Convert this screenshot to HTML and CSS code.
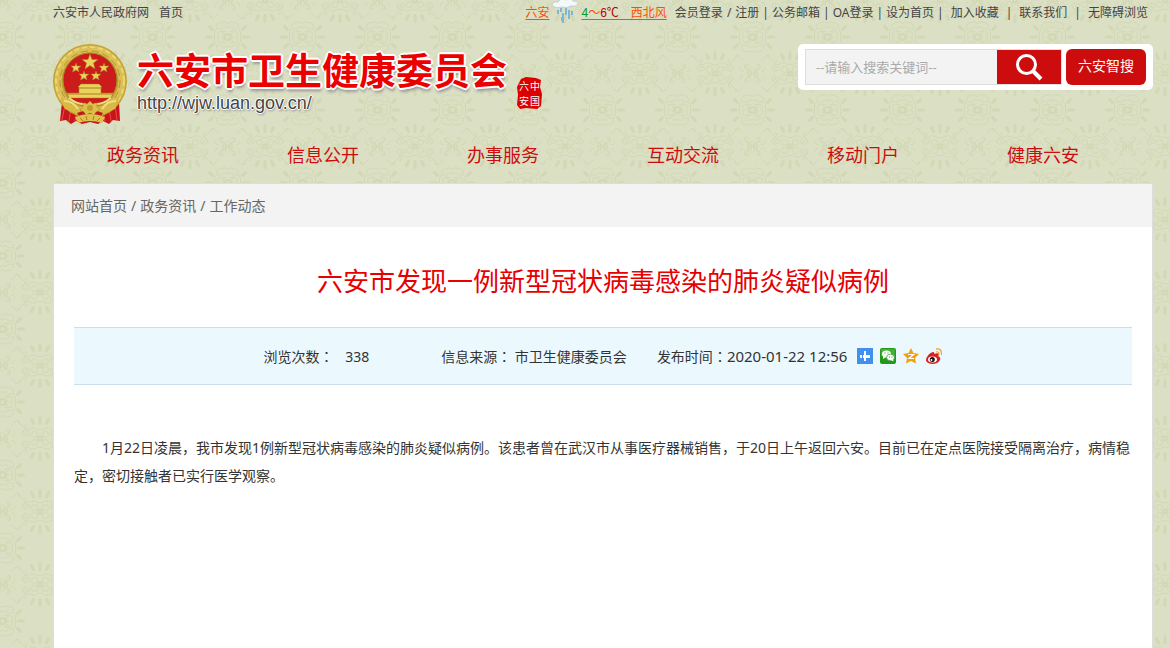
FILE: index.html
```html
<!DOCTYPE html>
<html lang="zh-CN">
<head>
    <meta charset="UTF-8">
    <meta name="viewport" content="width=device-width, initial-scale=1.0">
    <title>六安市发现一例新型冠状病毒感染的肺炎疑似病例</title>
    <link rel="stylesheet" href="styles.css">
</head>
<body>
    <div class="topbar">
        <div class="topbar-left">
            <a href="#">六安市人民政府网</a>
            <a href="#">首页</a>
        </div>
        <div class="weather">
            <a href="#">六安</a>
            <svg class="rain" viewBox="0 0 28 24" width="28" height="24" aria-hidden="true">
                <path d="M1 5Q2 1 7 2Q10-3 15 0Q20-3 22 1Q27 1 27 4Q25 7 20 6Q15 9 11 7Q4 9 1 5Z" fill="#f4f8fa" stroke="#c3ced6"/>
                <path d="M7 10v4M10 8v4M12 13v10M15 8v7M18 10v9M11 17v4M21 11v4" stroke="#80b5d4" stroke-width="2"/>
            </svg>
            <a href="#"><span class="low">4</span>～<span class="high">6℃</span>　西北风</a>
        </div>
        <div class="topbar-right">
            <a href="#">会员登录</a><span class="slash">/</span><a href="#">注册</a><span>|</span><a href="#">公务邮箱</a><span>|</span><a href="#">OA登录</a><span>|</span><a href="#">设为首页</a><span>|</span><a class="wide" href="#">加入收藏</a><span>|</span><a class="wide" href="#">联系我们</a><span>|</span><a class="wide" href="#">无障碍浏览</a>
        </div>
    </div>

    <header class="header">
        <a class="logo" href="#" aria-label="六安市卫生健康委员会">
            <svg class="emblem" viewBox="0 0 74 82" width="74" height="82" aria-hidden="true">
                <path d="M9 59L20 63L35 68L54 63L66 59L67 78L60 77L56 81L50 78L45 81L37 79L29 81L23 78L18 81L13 77L7 78Z" fill="#c8141a"/>
                <path d="M12 62L9 77M18 65L16 78M24 68L22 78M62 62L64 77M56 65L58 78M50 68L52 78" stroke="#ee4a3e" stroke-width="1"/>
                <ellipse cx="37" cy="38" rx="37" ry="37" fill="#c4a335"/>
                <ellipse cx="37" cy="38" rx="32" ry="32" fill="none" stroke="#d9bf55" stroke-width="7"/>
                <ellipse cx="37" cy="38" rx="34" ry="34" fill="none" stroke="#ecd770" stroke-width="2" stroke-dasharray="5 3"/>
                <ellipse cx="37" cy="38" rx="30" ry="30" fill="none" stroke="#b8942c" stroke-width="1" stroke-dasharray="7 4"/>
                <ellipse cx="37" cy="37" rx="27" ry="27" fill="#cb1b1b" stroke="#a9882a" stroke-width="1"/>
                <g fill="#ead25e" stroke="#a87e1c" stroke-width=".5">
                    <path d="M37 11L39 16.500L45 16.500L40.500 20L42 26L37 22.500L32 26L33.500 20L29 16.500L35 16.500Z"/>
                    <path d="M23 20L24 23L28 23L25 25.500L26 29L23 27L19.500 29L20.500 25.500L18 23L22 23Z"/>
                    <path d="M51 20L52 23L56 23L53 25.500L54 29L51 27L47.500 29L48.500 25.500L46 23L50 23Z"/>
                    <path d="M31 28L32 31L36 31L33 33.500L34 37L31 35L27.500 37L28.500 33.500L26 31L30 31Z"/>
                    <path d="M43 28L44 31L48 31L45 33.500L46 37L43 35L39.500 37L40.500 33.500L38 31L42 31Z"/>
                    <path d="M28 41H46L49 44H48V50H60L58 55H16L14 50H26V44H25Z"/>
                </g>
                <path d="M25 45H49M15 51H59" stroke="#a87e1c"/>
                <path d="M6 50Q17 68 37 62Q57 68 68 50L62 66L50 71Q37 64 24 71L12 66Z" fill="#d7b944"/>
                <path d="M11 58Q20 58 25 66M63 58Q54 58 49 66M16 55Q25 62 33 61M58 55Q49 62 41 61" fill="none" stroke="#f0dd80" stroke-width="2"/>
                <path d="M24 70Q37 64 50 70L48 73Q37 70 26 73Z" fill="#bd1c19"/>
                <path d="M37 58L40 61L44 60L44 64L47 67L43 69L41 72L37 70L33 72L31 69L27 67L30 64L30 60L34 61Z" fill="#dcc04c" stroke="#a87e1c" stroke-width=".5"/>
                <circle cx="37" cy="65" r="3" fill="#c69b2d"/>
                <path d="M22 74Q37 68 52 74L49 80Q37 76 25 80Z" fill="#dfc14d"/>
                <path d="M27 75L30 78M33 73L34 77M41 73L40 77M47 75L44 78" stroke="#a87e1c"/>
            </svg>
            <span class="logo-text">
                <span class="logo-name">六安市卫生健康委员会</span>
                <span class="logo-url">http://wjw.luan.gov.cn/</span>
            </span>
            <svg class="seal" viewBox="0 0 25 32" width="25" height="32" aria-hidden="true">
                <path d="M4 2L9 0L19 1L24 3L23 10L25 17L24 29L20 32L9 31L3 32L0 28L1 18L0 10Z" fill="#dc0000"/>
                <text x="13" y="13">中</text>
                <text x="2" y="13">六</text>
                <text x="13" y="28">国</text>
                <text x="2" y="28">安</text>
            </svg>
        </a>
        <form class="search">
            <div class="search-field">
                <input type="text" placeholder="--请输入搜索关键词--" aria-label="搜索关键词">
                <button type="button" aria-label="搜索">
                    <svg viewBox="0 0 28 28" width="28" height="28" fill="none" stroke="#fff">
                        <circle cx="11.500" cy="11.500" r="9" stroke-width="3"/>
                        <path d="M18 18L26 26" stroke-width="4"/>
                    </svg>
                </button>
            </div>
            <button class="smart" type="button">六安智搜</button>
        </form>
    </header>

    <nav class="nav">
        <a href="#">政务资讯</a>
        <a href="#">信息公开</a>
        <a href="#">办事服务</a>
        <a href="#">互动交流</a>
        <a href="#">移动门户</a>
        <a href="#">健康六安</a>
    </nav>

    <main class="content">
        <div class="breadcrumb">
            <a href="#">网站首页</a><span>/</span><a href="#">政务资讯</a><span>/</span><a href="#">工作动态</a>
        </div>
        <article class="article">
            <h1>六安市发现一例新型冠状病毒感染的肺炎疑似病例</h1>
            <div class="info">
                <span class="views">浏览次数<i lang="zh-TW">：</i> <b>338</b></span>
                <span class="source">信息来源<i lang="zh-TW">：</i> 市卫生健康委员会</span>
                <span class="date">发布时间<i lang="zh-TW">：</i><b>2020-01-22 12:56</b></span>
                <span class="share">
                    <a href="#" aria-label="分享">
                        <svg viewBox="0 0 16 16" width="16" height="16">
                            <path d="M0 0H16V16H0Z" fill="#4090ee"/>
                            <path d="M7 3H9V7H13V10H9V13H7V10H6V7H7ZM3 7H5V10H3Z" fill="#fff"/>
                        </svg>
                    </a>
                    <a href="#" aria-label="微信">
                        <svg viewBox="0 0 16 16" width="16" height="16">
                            <rect width="16" height="16" rx="2" fill="#219a19"/>
                            <path d="M1 1H15V8H1Z" fill="#44b033"/>
                            <ellipse cx="6.500" cy="6" rx="4.500" ry="3.500" fill="#fff"/>
                            <path d="M3 8L3 11L6 9Z" fill="#fff"/>
                            <ellipse cx="10.500" cy="9.500" rx="4" ry="3.200" fill="#fff" stroke="#219a19" stroke-width=".7"/>
                            <path d="M11 12L13.500 13.500L13 11Z" fill="#fff"/>
                            <path d="M4.500 5h1M7.500 5h1M9 9h1M11.500 9h1" stroke="#219a19"/>
                        </svg>
                    </a>
                    <a href="#" aria-label="QQ空间">
                        <svg viewBox="0 0 16 16" width="16" height="16">
                            <path d="M8 0L10.500 5L16 6L12 10L13 15.500L8 13L3 15.500L4 10L0 6L5.500 5Z" fill="#f3a00e"/>
                            <path d="M5 6.500H10.500L6 10.500H11" fill="none" stroke="#fff" stroke-width="1.200"/>
                        </svg>
                    </a>
                    <a href="#" aria-label="新浪微博">
                        <svg viewBox="0 0 16 16" width="16" height="16">
                            <path d="M1 9Q3 5 7 4Q9 4 8 6Q13 4 13 7L12 8Q15 9 14 12Q12 16 6 16Q0 15 0 12Q0 10 1 9Z" fill="#dc1f24"/>
                            <ellipse cx="6.500" cy="11.500" rx="4.500" ry="3" fill="#fff"/>
                            <circle cx="6.300" cy="11.500" r="2.500" fill="#111"/>
                            <circle cx="5.500" cy="12" r="1" fill="#fff"/>
                            <path d="M10 4Q13 3 13 6.500M10 1Q16 0 15.500 7" fill="none" stroke="#f2a533" stroke-width="1.300"/>
                        </svg>
                    </a>
                </span>
            </div>
            <p>1月22日凌晨，我市发现1例新型冠状病毒感染的肺炎疑似病例。该患者曾在武汉市从事医疗器械销售，于20日上午返回六安。目前已在定点医院接受隔离治疗，病情稳定，密切接触者已实行医学观察。</p>
        </article>
    </main>
</body>
</html>
```
FILE: styles.css
```css
* {
    box-sizing: border-box;
}
body {
    margin: 0;
    padding: 0 17px 0 53px;
    min-height: 100vh;
    display: flex;
    flex-direction: column;
    font-family: "Noto Sans", "Noto Sans CJK SC", sans-serif;
    font-size: 14px;
    color: #333;
    background-color: #dbdfc4;
    background-image: url("data:image/svg+xml,%3Csvg xmlns='http://www.w3.org/2000/svg' width='75' height='73' viewBox='0 0 75 73'%3E%3Cdefs%3E%3Cg id='q' fill='none' stroke='%23d1d8b3'%3E%3Cpath d='M0 0L8 8M1 6Q2 2 6 4Q9 6 7 9Q4 10 4 7M9 2Q13 2 12 6M9 13L14 18L23 10L19 5M0 23Q3 20 6 22Q11 22 11 27Q10 30 7 28M0 27Q5 25 6 29Q5 32 2 31M11 28Q14 31 13 36.500M37.500 9Q34 8 33 10Q29 12 26 9Q21 10 20 5Q20 2 23 2M14 18Q18 19 17 15M23 10Q26 13 22 14'/%3E%3Ccircle cx='7' cy='34' r='3'/%3E%3Ccircle cx='0' cy='36.500' r='3' stroke-width='2'/%3E%3Ccircle cx='3' cy='1' r='2'/%3E%3Ccircle cx='32' cy='4' r='3'/%3E%3Ccircle cx='25' cy='5' r='2'/%3E%3Ccircle cx='37.500' cy='0' r='2' stroke-width='2'/%3E%3Cpath d='M16 36.500H21M15 29L18 26M37.500 15V21M31 15L29 19' stroke-width='3' stroke-linecap='round'/%3E%3C/g%3E%3Cg id='h'%3E%3Cuse href='%23q'/%3E%3Cuse href='%23q' transform='scale(-1 1)'/%3E%3C/g%3E%3C/defs%3E%3Cg transform='translate(37.500 36.500)'%3E%3Cuse href='%23h'/%3E%3Cuse href='%23h' transform='scale(1 -1)'/%3E%3C/g%3E%3C/svg%3E");
    background-position: -35px -36px;
}
a {
    color: inherit;
    text-decoration: none;
}
.topbar {
    display: flex;
    height: 26px;
    padding-right: 5px;
    font-size: 12px;
    line-height: 26px;
    color: #444;
    white-space: nowrap;
}
.topbar-left {
    display: flex;
    gap: 10px;
    margin-right: auto;
}
.weather {
    display: flex;
    gap: 2px;
    margin-right: 8px;
    color: #ff4e00;
    font-family: "Liberation Sans", "Noto Sans CJK SC", sans-serif;
}
.weather a {
    text-decoration: underline;
    text-underline-offset: 2px;
}
.low {
    color: #009933;
}
.high {
    color: #b80000;
}
.topbar-right span {
    margin: 0 3px;
}
.topbar-right .slash {
    margin: 0 4px;
}
.topbar-right .wide {
    margin-left: 4px;
}
.topbar-right .wide + span {
    margin-left: 7px;
}
.header {
    display: flex;
    justify-content: space-between;
    align-items: flex-start;
    padding-top: 17px;
    height: 101px;
}
.logo {
    display: flex;
    align-items: flex-start;
}
.logo-text {
    display: flex;
    flex-direction: column;
    margin-left: 10px;
    white-space: nowrap;
}
.logo-name {
    font-family: "Noto Sans CJK SC", sans-serif;
    font-size: 37px;
    font-weight: bold;
    line-height: 52px;
    color: #eb0000;
    text-shadow: 2px 0 #fff, -2px 0 #fff, 0 2px #fff, 0 -2px #fff, 1px 1px #fff, -1px -1px #fff, 1px -1px #fff, -1px 1px #fff, 1px 4px 3px #999;
}
.logo-url {
    font-family: "Liberation Sans", sans-serif;
    font-size: 18px;
    line-height: 16px;
    color: #444;
    text-shadow: 1px 0 #fff, -1px 0 #fff, 0 1px #fff, 0 -1px #fff, 1px 2px 2px #999;
}
.seal {
    margin: 34px 0 0 10px;
}
.seal text {
    font-family: "Noto Sans CJK SC", sans-serif;
    font-size: 10px;
    fill: #fff;
}
.search {
    display: flex;
    gap: 4px;
    margin-top: 1px;
    padding: 5px 7px;
    background-color: #fff;
    border-radius: 5px;
}
.search-field {
    display: flex;
    height: 36px;
    border: 1px solid #ddd;
}
.search input {
    width: 191px;
    padding: 0 10px;
    border: none;
    font-family: inherit;
    font-size: 13px;
    background-color: #f3f3f3;
}
.search input::placeholder {
    color: #aaa;
}
.search button {
    width: 64px;
    padding: 0;
    border: none;
    background-color: #cd0c0d;
    color: #fff;
    cursor: pointer;
}
.search-field svg {
    display: block;
    margin: 0 auto;
}
.search .smart {
    width: 80px;
    padding-bottom: 4px;
    border-radius: 6px;
    font-family: inherit;
    font-size: 14px;
}
.nav {
    display: flex;
    padding-right: 20px;
}
.nav a {
    flex: 1;
    font-size: 18px;
    line-height: 56px;
    text-align: center;
    color: #cd0c0d;
}
.content {
    flex: 1;
    background-color: #fff;
    border: 1px solid #ddd;
    border-bottom: none;
}
.breadcrumb {
    height: 43px;
    padding-left: 17px;
    line-height: 44px;
    color: #666;
    background-color: #f3f3f3;
}
.breadcrumb span {
    margin: 0 4px;
}
.article {
    padding: 32px 20px 0;
}
.article h1 {
    margin: 0 0 24px;
    font-size: 26px;
    font-weight: normal;
    line-height: 44px;
    text-align: center;
    color: #e60000;
}
.info {
    display: flex;
    justify-content: center;
    height: 58px;
    line-height: 56px;
    background-color: #ebf9ff;
    border-top: 1px solid #cbdfeb;
    border-bottom: 1px solid #cbdfeb;
}
.info b {
    font-weight: normal;
}
/* the TC font sets the colon in the middle of its cell */
.info i {
    font-family: "Noto Sans CJK TC", sans-serif;
    font-style: normal;
}
.views b {
    margin-left: 8px;
}
.source {
    margin-left: 72px;
}
.date {
    margin-left: 30px;
}
.date b {
    font-size: 15px;
}
.share {
    display: flex;
    align-items: center;
    gap: 7px;
    margin-left: 10px;
}
.share svg {
    display: block;
}
.article p {
    margin: 49px 0 0;
    line-height: 28px;
    text-indent: 2em;
}
```
